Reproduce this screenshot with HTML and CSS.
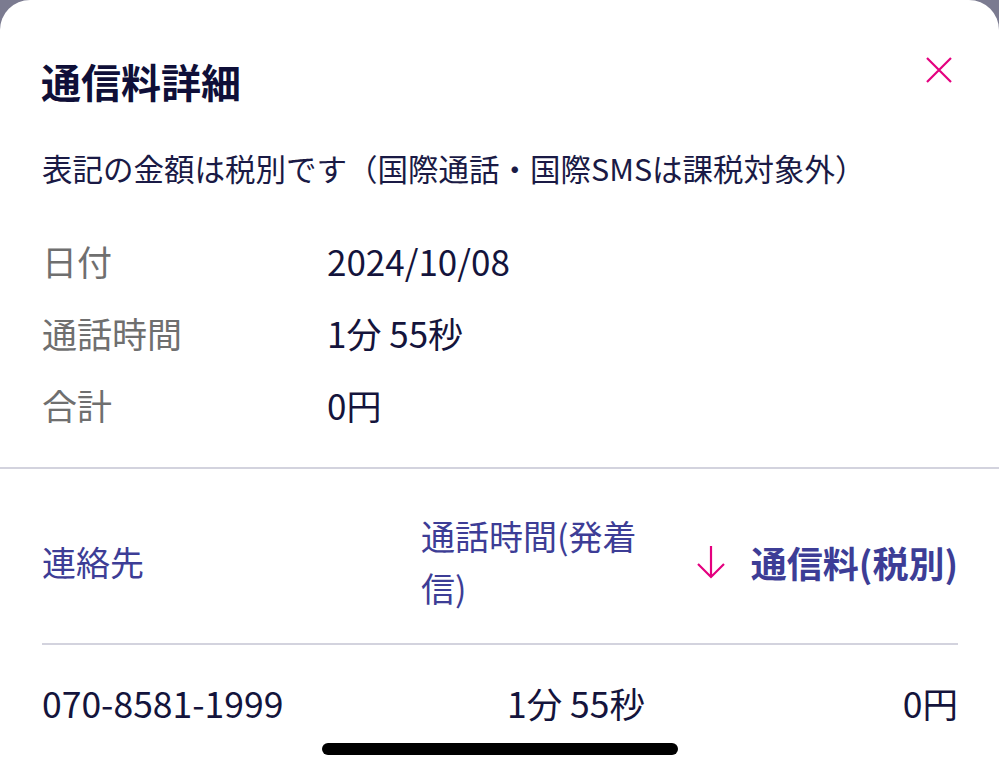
FILE: index.html
```html
<!DOCTYPE html>
<html lang="ja">
<head>
  <meta charset="UTF-8">
  <meta name="viewport" content="width=device-width, initial-scale=1.0">
  <title>通信料詳細</title>
  <link rel="stylesheet" href="styles.css">
</head>
<body>
  <div class="sheet">
    <div class="sheet-head">
      <h1>通信料詳細</h1>
      <button class="close" aria-label="閉じる">
        <svg width="28" height="28" viewBox="0 0 28 28"><path d="M2 2 L26 26 M26 2 L2 26" stroke="#e4007f" stroke-width="2.2" fill="none"/></svg>
      </button>
    </div>
    <p class="note">表記の金額は税別です（国際通話・国際SMSは課税対象外）</p>

    <dl class="summary">
      <dt>日付</dt><dd>2024/10/08</dd>
      <dt>通話時間</dt><dd>1分 55秒</dd>
      <dt>合計</dt><dd>0円</dd>
    </dl>

    <div class="divider"></div>

    <div class="list">
      <div class="list-head">
        <div class="col-name">連絡先</div>
        <div class="col-time">通話時間(発着信)</div>
        <div class="col-fee">
          <span class="sort-arrow">
            <svg width="32" height="36" viewBox="0 0 32 36"><path d="M16 2 V33 M3 20 L16 33 L29 20" stroke="#e4007f" stroke-width="2.2" fill="none"/></svg>
          </span>
          <strong>通信料(税別)</strong>
        </div>
      </div>
      <div class="list-row">
        <div class="col-name">070-8581-1999</div>
        <div class="col-time">1分 55秒</div>
        <div class="col-fee">0円</div>
      </div>
    </div>

    <div class="home-bar"></div>
  </div>
</body>
</html>
```

FILE: styles.css
```css
body {
  margin: 0;
  background-color: #7b7b90;
  font-family: "Noto Sans CJK JP", "Noto Sans", sans-serif;
  color: #14143c;
}
.sheet {
  background-color: white;
  border-radius: 30px 30px 0 0;
  height: 777px;
  box-sizing: border-box;
  padding-top: 52px;
  position: relative;
  overflow: hidden;
}
.sheet-head {
  display: flex;
  justify-content: space-between;
  align-items: center;
  padding: 0 46px 0 41px;
}
h1 {
  margin: 0;
  font-size: 40px;
  line-height: 58px;
  font-weight: 700;
  color: #0f0f38;
}
.close {
  background: none;
  border: none;
  padding: 0;
  margin-top: -20px;
  cursor: pointer;
}
.note {
  margin: 38px 0 0;
  padding: 0 42px;
  font-size: 30.5px;
  line-height: 40px;
  color: #1a1a45;
}
.summary {
  display: grid;
  grid-template-columns: 285px 1fr;
  row-gap: 0;
  margin: 37px 0 0;
  padding: 0 42px;
  font-size: 35px;
  line-height: 72px;
}
.summary dt {
  color: #6f6f6f;
}
.summary dd {
  margin: 0;
  color: #14143c;
}
.divider {
  height: 2px;
  background-color: #d3d3de;
  margin-top: 26px;
}
.list {
  padding: 0 41px 0 42px;
}
.list-head {
  display: grid;
  grid-template-columns: 379px 1fr auto;
  align-items: center;
  padding: 41px 0 29px;
  border-bottom: 2px solid #d3d3de;
  font-size: 34px;
  line-height: 52px;
  color: #3d3d96;
}
.list-head .col-time {
  max-width: 250px;
}
.list-head .col-fee {
  display: flex;
  align-items: center;
  gap: 24px;
}
.list-head strong {
  font-weight: 700;
  font-size: 36px;
}
.sort-arrow {
  display: flex;
}
.list-row {
  display: grid;
  grid-template-columns: 1fr 180px 1fr;
  padding: 33px 0;
  font-size: 35.5px;
  line-height: 50px;
  color: #14143c;
}
.list-row .col-time {
  text-align: center;
  transform: translateX(76px);
}
.list-row .col-fee {
  text-align: right;
}
.home-bar {
  position: absolute;
  left: 322px;
  top: 743px;
  width: 356px;
  height: 12px;
  border-radius: 6px;
  background-color: black;
}
```
